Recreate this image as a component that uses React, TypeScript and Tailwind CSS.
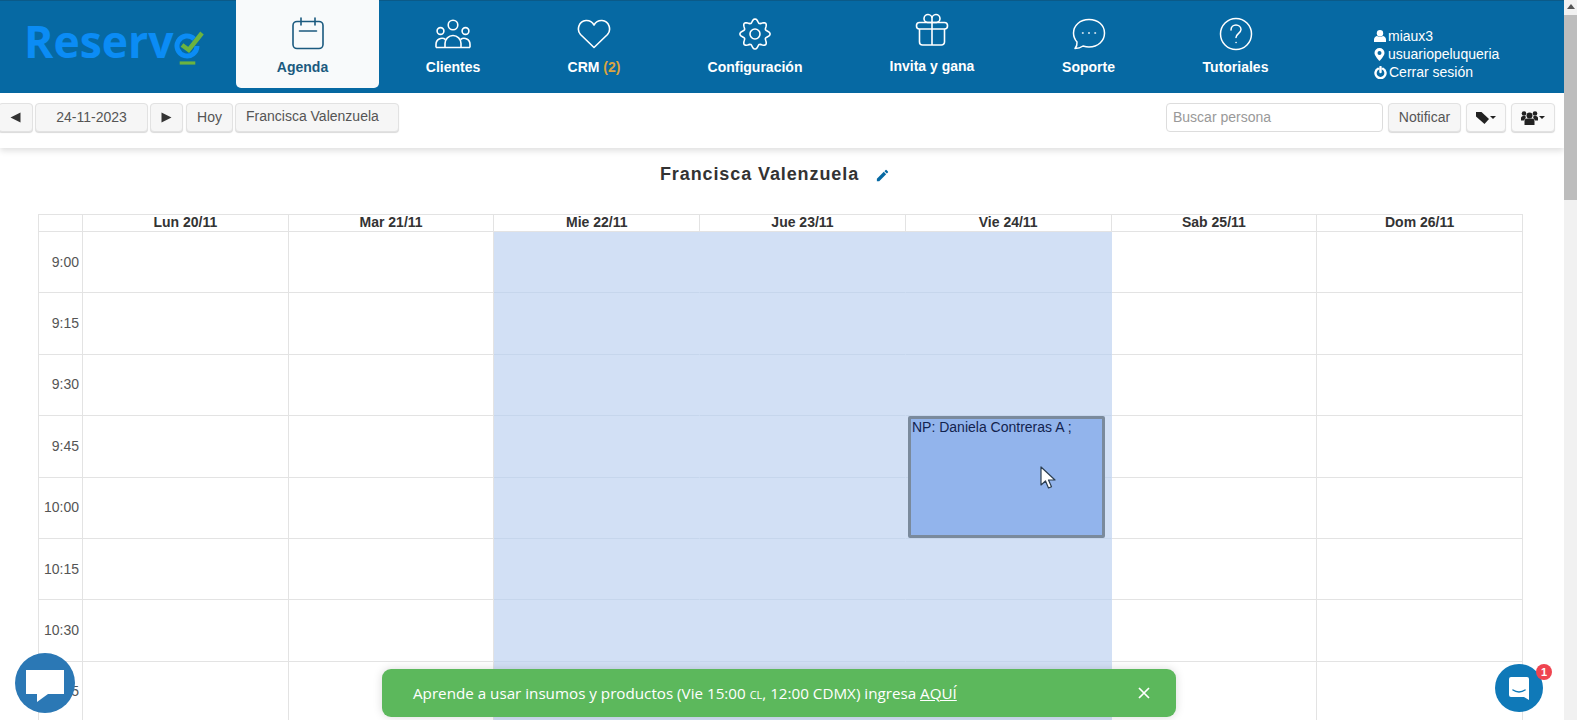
const hours = ['9:00', '9:15', '9:30', '9:45', '10:00', '10:15', '10:30', '10:45'];
const days = ['Lun 20/11', 'Mar 21/11', 'Mie 22/11', 'Jue 23/11', 'Vie 24/11', 'Sab 25/11', 'Dom 26/11'];
const shaded = [2, 3, 4];

const navItems = [
  { label: 'Clientes', width: 'w-[148px]', icon: <UsersIcon /> },
  { label: 'CRM', extra: '(2)', width: 'w-[134px]', icon: <HeartIcon /> },
  { label: 'Configuración', width: 'w-[188px]', icon: <GearIcon /> },
  { label: 'Invita y gana', width: 'w-[166px]', icon: <GiftIcon />, raised: true },
  { label: 'Soporte', width: 'w-[147px]', icon: <BubbleIcon /> },
  { label: 'Tutoriales', width: 'w-[147px]', icon: <HelpIcon /> },
];

// scalloped outline with 8 lobes
const gearPath = Array.from({ length: 97 }, (_, i) => {
  const a = (i / 96) * Math.PI * 2;
  const r = 13.2 + 1.9 * Math.cos(8 * a);
  return `${i === 0 ? 'M' : 'L'}${(17 + r * Math.cos(a)).toFixed(2)} ${(17 + r * Math.sin(a)).toFixed(2)}`;
}).join('');

function CalendarIcon() {
  return (
    <svg width="34" height="34" viewBox="0 0 34 34" fill="none" stroke="#1b5a7f" strokeWidth="1.600" strokeLinecap="round">
      <rect x="2" y="4.500" width="30" height="27" rx="4" />
      <path d="M10 1v7M24 1v7M8.500 14h17" />
    </svg>
  );
}

function UsersIcon() {
  return (
    <svg width="36" height="30" viewBox="0 0 36 30" fill="none" stroke="white" strokeWidth="1.600" strokeLinejoin="round">
      <circle cx="18" cy="6" r="4.800" />
      <circle cx="5.500" cy="12" r="3.400" />
      <circle cx="30.500" cy="12" r="3.400" />
      <path d="M10 28.500v-4a8 8 0 0 1 16 0v4" />
      <path d="M1 28.500v-3a6 6 0 0 1 9.500-5M35 28.500v-3a6 6 0 0 0-9.500-5" />
      <path d="M1 28.500h34" />
    </svg>
  );
}

function HeartIcon() {
  return (
    <svg width="34" height="30" viewBox="0 0 34 30" fill="none" stroke="white" strokeWidth="1.600" strokeLinejoin="round">
      <path d="M17 28.500 3.500 15.500C-.5 11 1.500 2 9 1.500c3.500-.2 6.300 1.500 8 4.500 1.700-3 4.500-4.700 8-4.500 7.500.5 9.500 9.500 5.500 14Z" />
    </svg>
  );
}

function GearIcon() {
  return (
    <svg width="34" height="34" viewBox="0 0 34 34" fill="none" stroke="white" strokeWidth="1.600" strokeLinejoin="round">
      <path d={`${gearPath}Z`} />
      <circle cx="17" cy="17" r="5" />
    </svg>
  );
}

function GiftIcon() {
  return (
    <svg width="34" height="34" viewBox="0 0 34 34" fill="none" stroke="white" strokeWidth="1.600" strokeLinejoin="round">
      <rect x="1.500" y="9.500" width="31" height="6.500" rx="3" />
      <path d="M4.500 16v13a3 3 0 0 0 3 3h19a3 3 0 0 0 3-3V16M17 9.500V32" />
      <path d="M17 9.500h-4.500a4 4 0 1 1 4.500-4ZM17 9.500h4.500a4 4 0 1 0-4.500-4Z" />
    </svg>
  );
}

function BubbleIcon() {
  return (
    <svg width="34" height="32" viewBox="0 0 34 32" fill="none" stroke="white" strokeWidth="1.500" strokeLinejoin="round">
      <path d="M17 1.500C8 1.500 1.500 7.500 1.500 15c0 3.500 1.300 6.500 3.500 9 .3 2.500-.6 4.800-2 6.500 3 0 6-1 8-2.500 2 .6 4 1 6 1 9 0 15.500-6 15.500-14S26 1.500 17 1.500Z" />
      <path d="M10.500 15h.6M16.700 15h.6M22.900 15h.6" strokeLinecap="round" />
    </svg>
  );
}

function HelpIcon() {
  return (
    <svg width="34" height="34" viewBox="0 0 34 34" fill="none" stroke="white" strokeWidth="1.500" strokeLinecap="round">
      <circle cx="17" cy="17" r="15.500" />
      <path d="M12 13c0-3 2.300-5 5-5s5 2 5 4.600c0 3.600-5 4-5 8" />
      <path d="M17 25.500h.1" />
    </svg>
  );
}

function Logo() {
  return (
    <div className="flex h-full w-[236px] shrink-0 items-start pt-[14px] pl-[24px]">
      <span className="font-['Open_Sans',sans-serif] text-[44.500px] leading-[52px] font-bold text-[#0b8cf5]">Reserv</span>
      <svg width="32" height="42" viewBox="0 0 32 42" fill="none" className="mt-[11px]">
        <path d="M20.100 12.900A10 10 0 1 0 23 20" stroke="#0b8cf5" strokeWidth="5" />
        <path d="M8 19l6.700 5L28 7" stroke="#6cb33f" strokeWidth="4.500" />
        <path d="M5.700 37h15.600" stroke="#6cb33f" strokeWidth="3.200" />
      </svg>
    </div>
  );
}

function ToolButton({ children, className }: { children: React.ReactNode; className: string }) {
  return (
    <div className={`flex h-[29px] items-center justify-center rounded-[4px] border border-[#e2e2e2] bg-[#f6f6f6] text-[14px] text-[#555] shadow-[0_1px_1px_rgba(0,0,0,0.15)] ${className}`}>
      {children}
    </div>
  );
}

export default function App() {
  return (
    <div className="relative flex h-[720px] w-[1577px] overflow-hidden bg-white font-['Liberation_Sans',sans-serif]">
      <div className="flex w-[1564px] shrink-0 flex-col">
        {/* Top nav */}
        <header className="flex h-[93px] shrink-0 items-start border-t border-[#0b5a88] bg-[#0669a3]">
          <Logo />
          <div className="mt-[-1px] flex h-[88px] w-[143px] shrink-0 flex-col items-center rounded-b-[5px] bg-[#f8fafb]">
            <div className="mt-[17px] flex h-[34px]"><CalendarIcon /></div>
            <span className="mt-[8px] mr-[10px] text-[14px] leading-[16px] font-bold text-[#1b5a7f]">Agenda</span>
          </div>
          {navItems.map((item) => (
            <div key={item.label} className={`flex h-[87px] shrink-0 flex-col items-center ${item.width}`}>
              <div className={`flex h-[34px] items-center ${item.raised ? 'mt-[12px]' : 'mt-[16px]'}`}>{item.icon}</div>
              <span className={`text-[14px] leading-[16px] font-bold text-white ${item.raised ? 'mt-[11px]' : 'mt-[8px]'}`}>
                {item.label}
                {item.extra && <span className="text-[#d9a441]"> {item.extra}</span>}
              </span>
            </div>
          ))}
          <div className="mt-[26px] ml-[65px] flex flex-col gap-0 text-[14px] leading-[18px] text-white">
            <div className="flex items-center gap-[2px]">
              <svg width="12" height="12" viewBox="0 0 12 12" fill="white"><circle cx="6" cy="3.200" r="3.200" /><path d="M0 12V9.500C0 7.500 2 6 3 6c1 1 5 1 6 0 1 0 3 1.500 3 3.500V12Z" /></svg>
              miaux3
            </div>
            <div className="flex items-center gap-[3px]">
              <svg width="11" height="13" viewBox="0 0 11 13" fill="white" fillRule="evenodd"><path d="M5.500 0a5 5 0 0 1 5 5c0 3-5 8-5 8s-5-5-5-8a5 5 0 0 1 5-5Zm0 3a2 2 0 1 0 0 4 2 2 0 0 0 0-4Z" /></svg>
              usuariopeluqueria
            </div>
            <div className="flex items-center gap-[2px]">
              <svg width="13" height="13" viewBox="0 0 13 13" fill="none" stroke="white" strokeWidth="2.400" strokeLinecap="round"><path d="M4 2.800a5 5 0 1 0 5 0M6.500 1v5" /></svg>
              Cerrar sesión
            </div>
          </div>
        </header>

        {/* Toolbar */}
        <div className="flex h-[55px] shrink-0 items-start justify-between bg-white pt-[10px] pr-[9px] shadow-[0_3px_6px_rgba(0,0,0,0.12)]">
          <div className="flex gap-[2px]">
            <ToolButton className="ml-[-2px] w-[35px]"><svg width="11" height="11" viewBox="0 0 11 11" fill="#333"><path d="M0.500 5.500 10.500 0.500V10.500Z" /></svg></ToolButton>
            <ToolButton className="w-[113px]">24-11-2023</ToolButton>
            <ToolButton className="w-[33px]"><svg width="11" height="11" viewBox="0 0 11 11" fill="#333"><path d="M10.500 5.500 0.500 0.500V10.500Z" /></svg></ToolButton>
            <ToolButton className="ml-[1px] w-[47px]">Hoy</ToolButton>
            <ToolButton className="w-[164px] justify-start pb-[2px] pl-[10px]">Francisca Valenzuela</ToolButton>
          </div>
          <div className="flex">
            <input
              readOnly
              placeholder="Buscar persona"
              className="h-[29px] w-[217px] rounded-[4px] border border-[#ddd] px-[6px] pb-[2px] text-[14px] outline-none placeholder:text-[#999]"
            />
            <ToolButton className="ml-[5px] w-[73px]">Notificar</ToolButton>
            <ToolButton className="ml-[5px] w-[40px] gap-[1px] bg-[#fafafa]">
              <svg width="13" height="12" viewBox="0 0 13 12" fill="#222"><path d="M0 0h5.500L13 7l-4.500 5L0 4.500Z" /></svg>
              <svg width="6" height="3" viewBox="0 0 6 3" fill="#222"><path d="M0 0h6L3 3Z" /></svg>
            </ToolButton>
            <ToolButton className="ml-[5px] w-[44px] gap-[1px] bg-[#fafafa]">
              <svg width="17" height="14" viewBox="0 0 17 14" fill="#222"><circle cx="8.500" cy="4.500" r="3" /><circle cx="3" cy="2.500" r="2.300" /><circle cx="14" cy="2.500" r="2.300" /><path d="M3.500 14V10c0-1.800 1.500-2.500 2.500-2.500h5c1 0 2.500.7 2.500 2.500v4ZM0 9.500V7c0-1 1-2 2-2h2.500L4.800 7 2.800 9.500ZM17 9.500V7c0-1-1-2-2-2h-2.500l-.3 2 2 2.500Z" /></svg>
              <svg width="6" height="3" viewBox="0 0 6 3" fill="#222"><path d="M0 0h6L3 3Z" /></svg>
            </ToolButton>
          </div>
        </div>

        {/* Title */}
        <div className="flex h-[66px] shrink-0 items-start justify-center pt-[15px] pr-[14px]">
          <h1 className="text-[18px] leading-[22px] font-bold tracking-[0.9px] text-[#333]">Francisca Valenzuela</h1>
          <svg width="15" height="15" viewBox="0 0 24 24" fill="#0669a3" className="mt-[5px] ml-[16px]"><path d="M3 17.250V21h3.750L17.800 9.940l-3.750-3.750ZM20.700 7.040a1 1 0 0 0 0-1.410l-2.340-2.340a1 1 0 0 0-1.410 0l-1.830 1.830 3.750 3.750Z" /></svg>
        </div>

        {/* Calendar */}
        <div className="ml-[38px] w-[1485px] shrink-0">
          <div className="grid h-[18px] grid-cols-[44px_repeat(7,1fr)] border-t border-l border-[#e3e3e3]">
            <div className="border-r border-b border-[#e3e3e3]" />
            {days.map((day) => (
              <div key={day} className="border-r border-b border-[#e3e3e3] text-center text-[14px] leading-[15px] font-bold text-[#333]">{day}</div>
            ))}
          </div>
          {hours.map((hour) => (
            <div key={hour} className="grid h-[61.400px] grid-cols-[44px_repeat(7,1fr)] border-l border-[#e3e3e3]">
              <div className="flex items-center justify-end border-r border-b border-[#e3e3e3] pr-[3px] text-[14px] text-[#555]">{hour}</div>
              {days.map((day, i) => (
                <div key={day} className={`border-r border-b border-[#e3e3e3] ${shaded.includes(i) ? 'border-r-transparent border-b-[#c6d6ec] bg-[#d2e0f5]' : ''}`} />
              ))}
            </div>
          ))}
        </div>
      </div>

      {/* Scrollbar */}
      <div className="flex w-[13px] shrink-0 flex-col items-center bg-[#f1f1f1]">
        <svg width="8" height="5" viewBox="0 0 8 5" fill="#555" className="mt-[4px]"><path d="M4 0l4 5H0Z" /></svg>
        <div className="mt-[6px] h-[185px] w-full bg-[#bdbdbd]" />
      </div>

      {/* Selected appointment */}
      <div className="absolute top-[416px] left-[908px] h-[122px] w-[197px] rounded-[2px] border-[3px] border-[#7a8a9c] bg-[#92b4ec] px-[1px] text-[14px] leading-[16px] text-[#12234f]">
        NP: Daniela Contreras A ;
      </div>
      <svg width="18" height="24" viewBox="0 0 18 24" className="absolute top-[466px] left-[1040px]">
        <path d="M1 1v18l4.500-4 3 7 3-1.300-3-6.700H15Z" fill="white" stroke="#2c3e50" strokeWidth="1.200" strokeLinejoin="round" />
      </svg>

      {/* Chat widgets */}
      <div className="absolute top-[653px] left-[15px] flex h-[60px] w-[60px] items-center justify-center rounded-full bg-[#2b78b5]">
        <svg width="38" height="32" viewBox="0 0 38 32" fill="white" className="mt-[5px]"><path d="M0 0h38v24H22L11 32v-8H0Z" /></svg>
      </div>
      <div className="absolute top-[664px] left-[1495px] flex h-[48px] w-[48px] items-center justify-center rounded-full bg-[#0f79b8]">
        <svg width="22" height="25" viewBox="0 0 22 25"><path d="M3 1h16a2 2 0 0 1 2 2v21l-5-3H3a2 2 0 0 1-2-2V3a2 2 0 0 1 2-2Z" fill="white" /><path d="M5 14c3.500 2.500 8.500 2.500 12 0" fill="none" stroke="#0f79b8" strokeWidth="1.500" strokeLinecap="round" /></svg>
      </div>
      <div className="absolute top-[664px] left-[1536px] flex h-[16px] w-[16px] items-center justify-center rounded-full bg-[#ef4450] text-[11px] leading-none font-bold text-white">1</div>

      {/* Toast */}
      <div className="absolute top-[669px] left-[382px] flex h-[48px] w-[794px] items-center justify-between rounded-[9px] bg-[#5cb85c] pr-[26px] pl-[31px] font-['Open_Sans',sans-serif] text-[15.200px] text-white shadow-[0_0_10px_rgba(0,0,0,0.15)]">
        <span>Aprende a usar insumos y productos (Vie 15:00 <span className="text-[11px]">CL</span>, 12:00 CDMX) ingresa <span className="underline">AQUÍ</span></span>
        <svg width="12" height="12" viewBox="0 0 12 12" fill="none" stroke="white" strokeWidth="1.700"><path d="M1 1l10 10M11 1 1 11" /></svg>
      </div>
    </div>
  );
}
